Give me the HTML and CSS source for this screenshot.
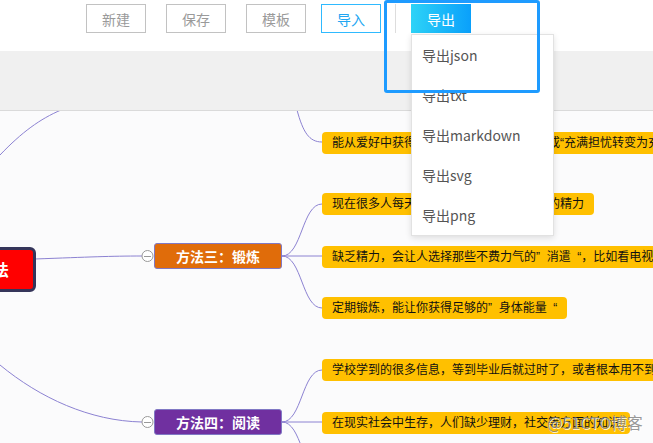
FILE: index.html
```html
<!DOCTYPE html>
<html lang="zh-CN">
<head>
  <meta charset="UTF-8">
  <meta name="viewport" content="width=device-width, initial-scale=1.0">
  <title>思维导图</title>
  <link rel="stylesheet" href="styles.css">
</head>
<body>
  <div class="page">

    <header class="toolbar">
      <button class="btn toolbar__btn">新建</button>
      <button class="btn toolbar__btn">保存</button>
      <button class="btn toolbar__btn">模板</button>
      <button class="btn btn_outline toolbar__import">导入</button>
      <span class="toolbar__divider"></span>
      <button class="btn btn_primary">导出</button>
    </header>

    <div class="band"></div>

    <main class="map">
      <svg class="map__lines" width="653" height="332" viewBox="0 111 653 332">
        <g fill="none" stroke="#8c82d2" stroke-width="1">
          <path d="M0,155 C22,132 40,119 61,110"/>
          <path d="M35,259 C90,257 110,256 142,256"/>
          <path d="M0,365 C40,398 90,421 142,422"/>
          <path d="M297,110 C303,132 309,142 322,142"/>
          <path d="M282,256 C302,256 302,204 322,204"/>
          <path d="M282,256 L322,256"/>
          <path d="M282,256 C302,256 302,308 322,308"/>
          <path d="M282,422 C302,422 302,370 322,370"/>
          <path d="M282,422 L322,422"/>
          <path d="M282,422 C302,422 302,474 322,474"/>
        </g>
        <g fill="#fff" stroke="#999" stroke-width="1">
          <circle cx="147.5" cy="256" r="5.5"/>
          <circle cx="147.5" cy="422" r="5.5"/>
        </g>
        <g stroke="#999" stroke-width="1">
          <path d="M144,256.5 H151"/>
          <path d="M144,422.5 H151"/>
        </g>
      </svg>

      <div class="node node_root">提升精力的方法</div>

      <div class="node node_branch node_orange" style="top: 132px">方法三：锻炼</div>
      <div class="node node_branch node_purple" style="top: 298px">方法四：阅读</div>

      <div class="node node_leaf" style="top: 21px">能从爱好中获得满足感，让心态从无聊中或“充满担忧转变为充满期待”</div>
      <div class="node node_leaf" style="top: 82px">现在很多人每天都缺乏完成工作时所需要的精力</div>
      <div class="node node_leaf" style="top: 135px">缺乏精力，会让人选择那些不费力气的”  消遣  “，比如看电视、刷手机</div>
      <div class="node node_leaf" style="top: 186px">定期锻炼，能让你获得足够的”  身体能量  “</div>
      <div class="node node_leaf" style="top: 248px">学校学到的很多信息，等到毕业后就过时了，或者根本用不到</div>
      <div class="node node_leaf" style="top: 301px">在现实社会中生存，人们缺少理财，社交等方面的知识</div>

      <span class="watermark">@51CTO博客</span>
    </main>

    <ul class="dropdown">
      <li class="dropdown__item">导出json</li>
      <li class="dropdown__item">导出txt</li>
      <li class="dropdown__item">导出markdown</li>
      <li class="dropdown__item">导出svg</li>
      <li class="dropdown__item">导出png</li>
    </ul>

    <div class="highlight"></div>
  </div>
</body>
</html>
```

FILE: styles.css
```css
*, *:after, *:before {
  box-sizing: border-box;
}

html, body {
  margin: 0;
  height: 100%;
  background-color: #fff;
  font-family: "Noto Sans CJK SC", "Noto Sans", sans-serif;
}

.page {
  position: relative;
  width: 653px;
  height: 443px;
  overflow: hidden;
}

.toolbar {
  display: flex;
  align-items: flex-start;
  height: 51px;
  padding: 4px 0 0 86px;
  background-color: #fff;
}

.btn {
  width: 60px;
  height: 29px;
  padding: 0;
  background-color: #fff;
  border: 1px solid #c2c2c2;
  outline: none;
  color: #9a9a9a;
  font-size: 14px;
  line-height: 1;
  font-family: inherit;
  cursor: pointer;
}

.toolbar__btn {
  margin-right: 20px;
}

.toolbar__btn:nth-child(3) {
  margin-right: 15px;
}

.btn_outline {
  border-color: #2fbaff;
  color: #22a6f2;
}

.toolbar__divider {
  width: 1px;
  height: 29px;
  margin: 0 15px 0 14px;
  background-color: #ddd;
}

.btn_primary {
  border: none;
  background: linear-gradient(90deg, #2dd3f7, #0aa0fb);
  color: #fff;
}

.band {
  height: 60px;
  background-color: #f0f0f0;
  border-bottom: 1px solid #dadada;
}

.map {
  position: relative;
  height: 332px;
  background-color: #fbfbfc;
}

.map__lines {
  position: absolute;
  top: 0;
  left: 0;
}

.node {
  position: absolute;
  white-space: nowrap;
}

.node_root {
  top: 136px;
  left: -125px;
  width: 161px;
  height: 45px;
  padding-right: 24px;
  background-color: #f00;
  border: 3px solid #35355a;
  border-radius: 6px;
  color: #fff;
  font-size: 16px;
  font-weight: 700;
  line-height: 39px;
  text-align: right;
}

.node_branch {
  left: 154px;
  width: 128px;
  height: 26px;
  border: 1px solid #8078c4;
  border-radius: 3px;
  color: #fff;
  font-size: 14px;
  font-weight: 700;
  line-height: 24px;
  text-align: center;
}

.node_orange {
  background-color: #e06c0a;
}

.node_purple {
  background-color: #7030a0;
}

.node_leaf {
  left: 322px;
  height: 22px;
  padding: 0 10px;
  background-color: #ffc000;
  border-radius: 4px;
  color: #111;
  font-family: "Liberation Sans", "Noto Sans CJK SC", sans-serif;
  font-size: 12px;
  line-height: 22px;
  white-space: pre;
}

.watermark {
  position: absolute;
  top: 300px;
  left: 547px;
  color: rgba(120, 120, 120, 0.75);
  font-size: 16px;
  line-height: 22px;
  text-shadow: 1px 1px 0 rgba(255, 255, 255, 0.8);
  white-space: nowrap;
}

.dropdown {
  position: absolute;
  top: 34px;
  left: 411px;
  width: 143px;
  margin: 0;
  padding: 0;
  list-style: none;
  background-color: #fff;
  border: 1px solid #e2e2e2;
  box-shadow: 0 2px 6px rgba(0, 0, 0, 0.12);
}

.dropdown__item {
  height: 40px;
  padding-left: 10px;
  color: #555;
  font-size: 14px;
  line-height: 40px;
}

.highlight {
  position: absolute;
  top: 0;
  left: 384px;
  width: 156px;
  height: 93px;
  border: 3px solid #1e9bff;
  border-radius: 3px;
}
```
